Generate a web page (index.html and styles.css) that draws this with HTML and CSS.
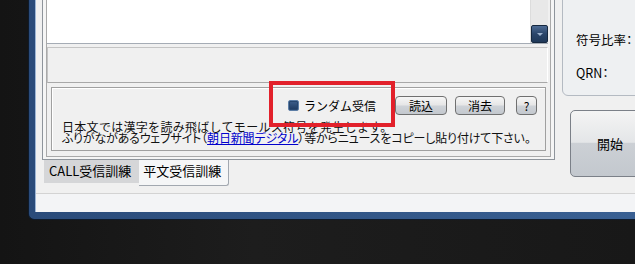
FILE: index.html
```html
<!DOCTYPE html>
<html lang="ja">
<head>
    <meta charset="UTF-8">
    <title>平文受信訓練</title>
    <link rel="stylesheet" href="styles.css">
</head>
<body>
    <div class="window">
        <div class="client">
            <div class="main">
                <div class="tabctl">
                    <div class="tabframe">
                        <div class="tabpage">
                            <div class="memo">
                                <div class="memo-text"></div>
                                <div class="scrollbar">
                                    <div class="sb-track"></div>
                                    <div class="sb-down"><span class="sb-arrow"></span></div>
                                </div>
                            </div>
                            <div class="field"></div>
                            <div class="panel">
                                <div class="controls">
                                    <label class="check"><span class="box"></span>ランダム受信</label>
                                    <button class="btn btn-load">読込</button>
                                    <button class="btn btn-clear">消去</button>
                                    <button class="btn btn-help">?</button>
                                    <div class="mark"></div>
                                </div>
                                <p class="note note-first">日本文では漢字を読み飛ばしてモールス符号を発生します。</p>
                                <p class="note note-second">ふりがながあるウェブサイト（<a href="#">朝日新聞デジタル</a>）等からニュースをコピーし貼り付けて下さい。</p>
                            </div>
                        </div>
                    </div>
                    <div class="tabs">
                        <div class="tab">CALL受信訓練</div>
                        <div class="tab tab-active">平文受信訓練</div>
                    </div>
                </div>
                <div class="side">
                    <div class="group">
                        <div class="group-row">符号比率：</div>
                        <div class="group-row">QRN：</div>
                    </div>
                    <button class="start">開始</button>
                </div>
            </div>
            <div class="status"></div>
        </div>
    </div>
</body>
</html>
```

FILE: styles.css
```css
html, body {
    margin: 0;
    height: 264px;
    overflow: hidden;
}
body {
    background: linear-gradient(90deg, #141414, #1d1d1d 40%, #181818);
    font-family: "Noto Sans CJK JP", "Liberation Sans", sans-serif;
    font-size: 12px;
    color: #000;
}
.window {
    margin-left: 28px;
    width: 640px;
    height: 220px;
    box-sizing: border-box;
    background: linear-gradient(90deg, #2a4b7a, #3a6194);
    border-left: 1px solid #0e1a2b;
    border-bottom: 1px solid #0e1a2b;
    border-bottom-left-radius: 6px;
    padding: 0 0 7px 6px;
}
.client {
    height: 212px;
    background: #f0f0f0;
    border-left: 1px solid #9db6d6;
    border-bottom: 1px solid #9db6d6;
    box-sizing: border-box;
}
.main {
    display: flex;
    height: 193px;
}
.tabctl {
    margin-left: 6px;
    width: 513px;
}
.tabframe {
    height: 160px;
    box-sizing: border-box;
    border: 1px solid #8e949b;
    border-top: none;
    background: #f5f5f5;
    padding: 0 3px 2px 3px;
}
.tabpage {
    height: 157px;
    box-sizing: border-box;
    border: 1px solid #a9a9a9;
    border-top: none;
    background: #f0f0f0;
    padding: 0 2px 0 0;
}
.memo {
    display: flex;
    height: 44px;
    box-sizing: border-box;
    border-bottom: 1px solid #a5acb5;
}
.memo-text {
    flex: 1;
    background: #fff;
}
.scrollbar {
    width: 17px;
    display: flex;
    flex-direction: column;
    background: #e8e8e8;
    border-left: 1px solid #dcdcdc;
}
.sb-track {
    flex: 1;
}
.sb-down {
    height: 16px;
    background: linear-gradient(#4d6b94, #2a4569 50%, #1f3858);
    border: 1px solid #16283f;
    border-radius: 2px;
    display: flex;
    align-items: center;
    justify-content: center;
}
.sb-arrow {
    width: 0;
    height: 0;
    border-left: 3px solid transparent;
    border-right: 3px solid transparent;
    border-top: 3px solid #9fb4cf;
}
.field {
    height: 36px;
    margin: 3px 0 0 0;
    box-sizing: border-box;
    border: 1px solid #c4c4c4;
    border-right-color: #fff;
    border-bottom: 1px solid #a8a8a8;
    background: #f0f0f0;
}
.panel {
    position: relative;
    margin: 4px 2px 0 4px;
    height: 64px;
    box-sizing: border-box;
    border: 1px solid #a0a0a0;
    box-shadow: inset 1px 1px #fff;
    padding: 7px 8px 0 10px;
}
.controls {
    display: flex;
    justify-content: flex-end;
    align-items: center;
    height: 20px;
}
.check {
    display: flex;
    align-items: center;
    gap: 5px;
    margin-right: 19px;
    font-size: 12px;
}
.box {
    width: 9px;
    height: 9px;
    border: 1px solid #5d7ea6;
    border-radius: 2px;
    background: linear-gradient(#3e5f8c, #1e3a60);
    box-shadow: inset 0 0 0 1px #28476f;
}
.btn {
    height: 19px;
    padding: 0;
    border: 1px solid #707070;
    border-radius: 4px;
    background: linear-gradient(#f6f6f6, #e6e6e6 48%, #cfd3d8 52%, #c3c8ce);
    font-family: inherit;
    font-size: 12px;
    line-height: 17px;
    color: #000;
}
.btn-load {
    width: 52px;
    margin-right: 8px;
}
.btn-clear {
    width: 50px;
    margin-right: 11px;
}
.btn-help {
    width: 21px;
}
.mark {
    position: absolute;
    left: 217px;
    top: -7px;
    width: 126px;
    height: 46px;
    box-sizing: border-box;
    border: 4px solid #e2212b;
}
.note {
    margin: 0;
    line-height: 11px;
    white-space: nowrap;
    color: #111;
}
.note-first {
    margin-top: 6px;
    letter-spacing: 0.3px;
}
.note-second {
    font-feature-settings: "palt";
    letter-spacing: -0.15px;
}
.note a {
    color: #0000cc;
}
.tabs {
    display: flex;
    padding-left: 2px;
    font-size: 13px;
}
.tab {
    height: 23px;
    line-height: 22px;
    padding: 0 8px 0 5px;
    background: #d5d6d8;
}
.tab-active {
    height: 25px;
    padding: 0 7px 0 4px;
    background: #f5f6f7;
    border-right: 1px solid #a2a8b0;
    border-bottom: 1px solid #a2a8b0;
    border-bottom-right-radius: 3px;
}
.side {
    flex: 1;
    padding-left: 7px;
}
.group {
    margin-top: -10px;
    height: 106px;
    box-sizing: border-box;
    border: 1px solid #b4bac2;
    border-radius: 6px;
    background: #eef0f2;
    padding: 41px 0 0 13px;
}
.group-row {
    font-size: 12.5px;
    line-height: 16px;
    height: 33px;
    white-space: nowrap;
    font-feature-settings: "palt";
}
.start {
    display: block;
    margin: 14px 0 0 8px;
    width: 80px;
    height: 67px;
    border: 1px solid #7b8088;
    border-radius: 5px;
    background: linear-gradient(#f4f4f4, #e4e6e8 48%, #ccd0d5 50%, #c3c8ce);
    font-family: inherit;
    font-size: 13px;
    color: #000;
    padding: 0;
}
.status {
    height: 18px;
    border-top: 1px solid #d3d3d3;
    background: #f3f4f6;
}
```
